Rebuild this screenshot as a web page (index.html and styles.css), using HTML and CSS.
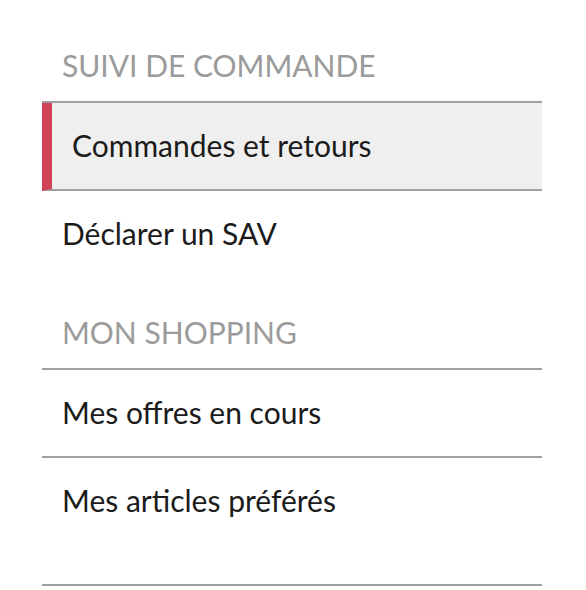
FILE: index.html
```html
<!DOCTYPE html>
<html lang="fr">
<head>
    <meta charset="UTF-8">
    <meta name="viewport" content="width=device-width, initial-scale=1.0">
    <title>Mon compte</title>
    <link rel="stylesheet" href="styles.css">
</head>
<body>
    <nav class="sidebar">
        <div class="menu-section">
            <h2 class="menu-title">SUIVI DE COMMANDE</h2>
            <ul class="menu-list">
                <li class="menu-item active"><a href="#">Commandes et retours</a></li>
                <li class="menu-item no-border"><a href="#">Déclarer un SAV</a></li>
            </ul>
        </div>

        <div class="menu-section">
            <h2 class="menu-title">MON SHOPPING</h2>
            <ul class="menu-list">
                <li class="menu-item"><a href="#">Mes offres en cours</a></li>
                <li class="menu-item last"><a href="#">Mes articles préférés</a></li>
            </ul>
        </div>
    </nav>
</body>
</html>
```

FILE: styles.css
```css
* {
    margin: 0;
    padding: 0;
    box-sizing: border-box;
    font-family: Lato, "Noto Sans", sans-serif;
}

body {
    background-color: white;
    color: #1b1b1b;
}

.sidebar {
    width: 500px;
    margin-left: 42px;
    padding-top: 10px;
}

.menu-title {
    font-size: 30px;
    font-weight: normal;
    line-height: 36px;
    color: #9b9b9b;
    padding: 37px 0 18px 20px;
    border-bottom: 2px solid #a0a0a0;
}

.menu-list {
    list-style: none;
}

.menu-item {
    border-bottom: 2px solid #a0a0a0;
}

.menu-item a {
    display: block;
    font-size: 30px;
    line-height: 36px;
    padding: 24px 0 26px 20px;
    color: #1b1b1b;
    text-decoration: none;
}

.menu-item.active {
    background-color: #efefef;
    border-left: 10px solid #cf4258;
}

.menu-item.no-border {
    border-bottom: none;
}

.menu-item.last a {
    padding-bottom: 66px;
}
```
